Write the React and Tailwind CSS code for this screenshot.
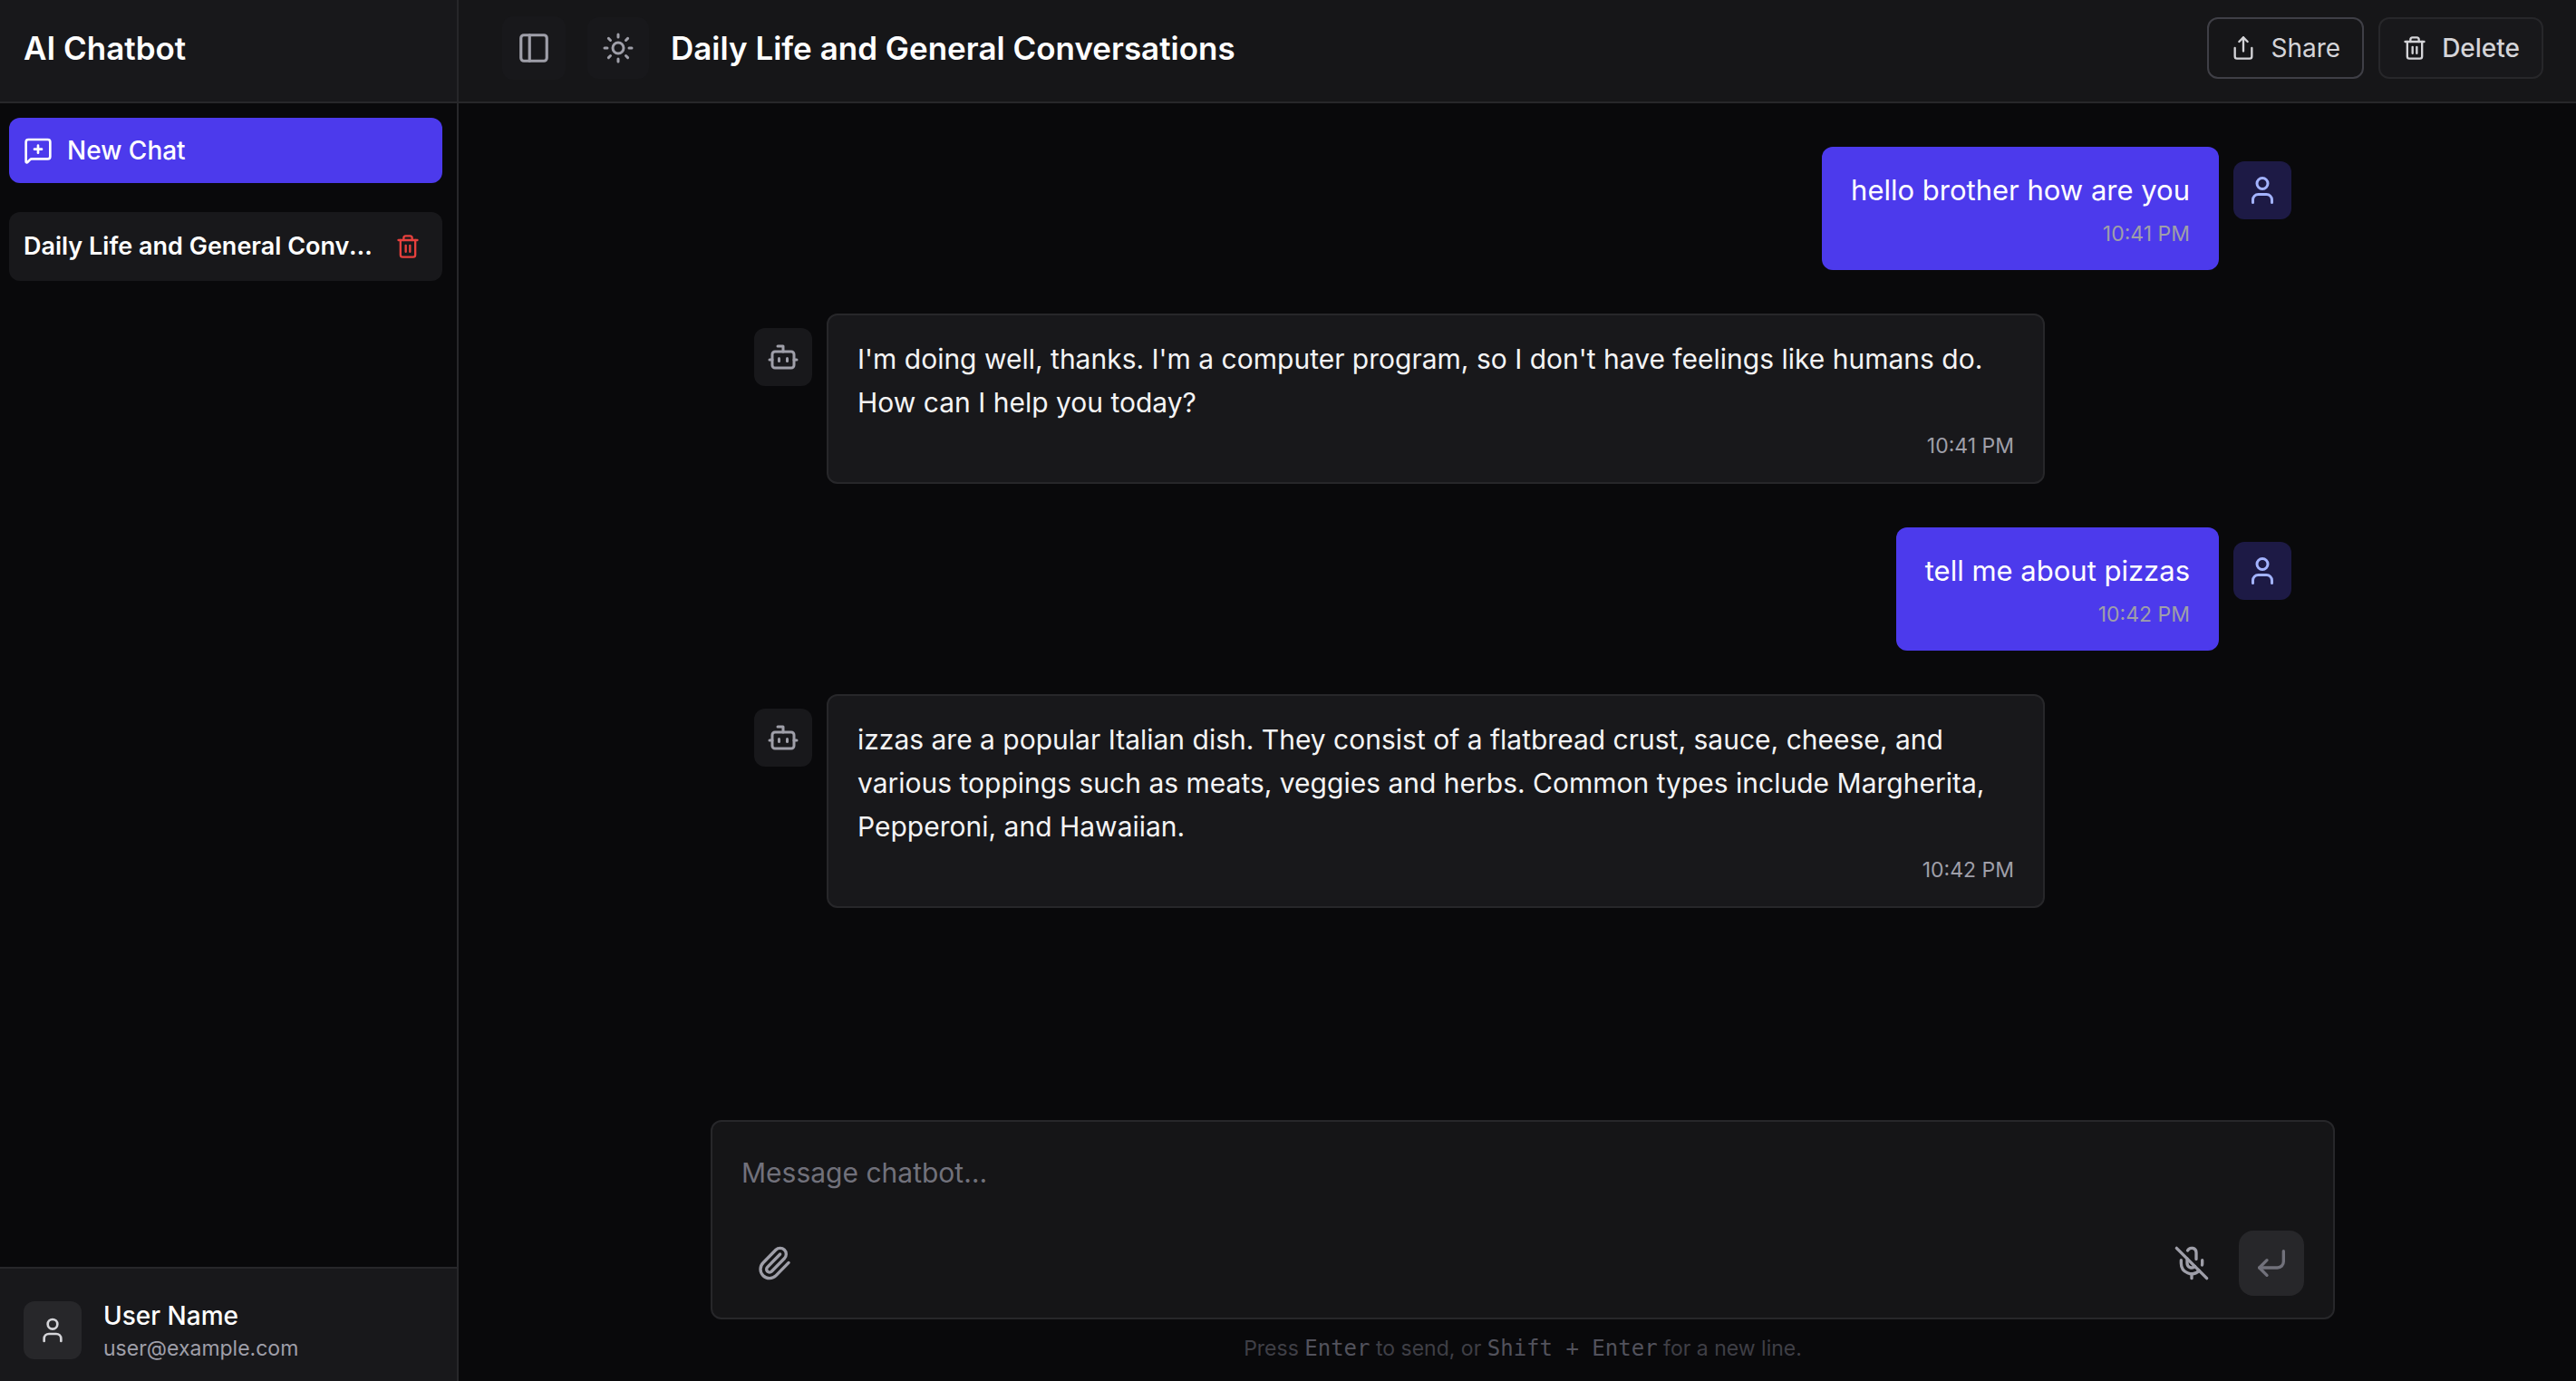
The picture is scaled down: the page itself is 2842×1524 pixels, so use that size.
import React, { useState } from 'react';
import {
  Bot,
  CornerDownLeft,
  MessageSquarePlus,
  MicOff,
  PanelLeft,
  Paperclip,
  Share,
  Sun,
  Trash2,
  User,
} from 'lucide-react';

const chats = [{ id: 1, title: 'Daily Life and General Conversations' }];

const messages = [
  { id: 1, role: 'user', text: 'hello brother how are you', time: '10:41 PM' },
  {
    id: 2,
    role: 'bot',
    text: "I'm doing well, thanks. I'm a computer program, so I don't have feelings like humans do. How can I help you today?",
    time: '10:41 PM',
  },
  { id: 3, role: 'user', text: 'tell me about pizzas', time: '10:42 PM' },
  {
    id: 4,
    role: 'bot',
    text: 'izzas are a popular Italian dish. They consist of a flatbread crust, sauce, cheese, and various toppings such as meats, veggies and herbs. Common types include Margherita, Pepperoni, and Hawaiian.',
    time: '10:42 PM',
  },
];

const Sidebar = () => {
  return (
    <aside className="flex w-[506px] shrink-0 flex-col border-r-2 border-[#27272a] bg-[#09090b]">
      <div className="flex h-[114px] items-center border-b-2 border-[#27272a] bg-[#18181b] px-[26px] pb-[6px]">
        <h1 className="text-[35px] leading-10 font-semibold text-white">AI Chatbot</h1>
      </div>

      <div className="flex flex-1 flex-col gap-8 py-4 pr-4 pl-[10px]">
        <button className="flex h-[72px] items-center gap-4 rounded-xl bg-[#4c3aec] px-4 text-[28px] leading-10 font-medium text-white">
          <MessageSquarePlus size={32} />
          New Chat
        </button>

        {/* Chat history */}
        <ul>
          {chats.map((chat) => (
            <li
              key={chat.id}
              className="flex h-[76px] items-center gap-6 rounded-xl bg-[#18181b] pr-6 pl-4"
            >
              <a
                href="#chat"
                className="min-w-0 flex-1 truncate text-[27px] leading-10 font-semibold text-white"
              >
                {chat.title}
              </a>
              <button aria-label="Delete chat" className="text-[#e7403d]">
                <Trash2 size={28} />
              </button>
            </li>
          ))}
        </ul>
      </div>

      {/* User info */}
      <div className="flex items-center gap-6 border-t-2 border-[#27272a] bg-[#18181b] px-[26px] pt-8 pb-5">
        <div className="flex size-16 items-center justify-center rounded-xl bg-[#27272a] text-[#d4d4d8]">
          <User size={32} />
        </div>
        <div>
          <p className="text-[28px] leading-10 font-medium text-white">User Name</p>
          <p className="text-[23px] leading-8 text-[#9f9fa9]">user@example.com</p>
        </div>
      </div>
    </aside>
  );
};

const Header = () => {
  return (
    <header className="flex h-[114px] items-center justify-between border-b-2 border-[#27272a] bg-[#161618] pr-9 pb-[6px] pl-12">
      <div className="flex items-center gap-6">
        <button
          aria-label="Toggle sidebar"
          className="rounded-xl bg-[#18181b] p-4 text-[#9f9fa9]"
        >
          <PanelLeft size={38} />
        </button>
        <button
          aria-label="Toggle theme"
          className="rounded-xl bg-[#18181b] p-4 text-[#9f9fa9]"
        >
          <Sun size={36} />
        </button>
        <h2 className="text-[35px] leading-10 font-semibold text-white">{chats[0].title}</h2>
      </div>
      <div className="flex gap-4">
        <button className="flex h-[68px] items-center gap-4 rounded-xl border-2 border-[#3f3f46] px-6 text-[28px] leading-10 text-[#d4d4d8]">
          <Share size={28} />
          Share
        </button>
        <button className="flex h-[68px] items-center gap-4 rounded-xl border-2 border-[#27272a] bg-[#18181b] px-6 text-[28px] leading-10 font-medium text-[#d4d4d8]">
          <Trash2 size={28} />
          Delete
        </button>
      </div>
    </header>
  );
};

const Message = ({ message }) => {
  const isUser = message.role === 'user';

  return (
    <div className={`flex items-start gap-4 ${isUser ? 'flex-row-reverse' : ''}`}>
      <div
        className={`mt-4 flex size-16 shrink-0 items-center justify-center rounded-xl ${
          isUser ? 'bg-[#1d1a45] text-[#a3b3ff]' : 'bg-[#18181b] text-[#9f9fa9]'
        }`}
      >
        {isUser ? <User size={36} /> : <Bot size={36} />}
      </div>
      <div
        className={`max-w-[1344px] rounded-xl px-8 py-6 ${
          isUser
            ? 'bg-[#4c3aec] text-[31px] text-white'
            : 'border-2 border-[#27272a] bg-[#18181b] text-3xl text-[#f4f4f5]'
        }`}
      >
        <p className="leading-12">{message.text}</p>
        <p className="mt-2 text-right text-[23px] leading-8 text-[#9f9fa9]">{message.time}</p>
      </div>
    </div>
  );
};

const MessageInput = () => {
  const [value, setValue] = useState('');

  return (
    <div className="px-12 pb-5">
      <form
        onSubmit={(e) => e.preventDefault()}
        className="mx-auto max-w-[1792px] rounded-xl border-2 border-[#27272a] bg-[#151517] px-8 pt-8 pb-6"
      >
        <textarea
          rows={1}
          value={value}
          onChange={(e) => setValue(e.target.value)}
          aria-label="Message chatbot"
          placeholder="Message chatbot…"
          className="block h-[88px] w-full resize-none text-3xl leading-12 text-white outline-none placeholder:text-[#71717b]"
        />
        <div className="flex items-center justify-between text-[#9f9fa9]">
          <button type="button" aria-label="Attach file" className="flex size-[72px] items-center justify-center">
            <Paperclip size={40} />
          </button>
          <div className="flex gap-4">
            <button type="button" aria-label="Voice input" className="flex size-[72px] items-center justify-center">
              <MicOff size={40} />
            </button>
            <button
              type="submit"
              aria-label="Send"
              className="flex size-[72px] items-center justify-center rounded-2xl bg-[#27272a] text-[#71717b]"
            >
              <CornerDownLeft size={40} />
            </button>
          </div>
        </div>
      </form>
      <p className="mt-4 text-center text-[23px] leading-8 text-[#3f3f46]">
        Press <kbd className="font-['DejaVu_Sans_Mono',monospace] text-2xl leading-8 text-[#52525c]">Enter</kbd> to
        send, or{' '}
        <kbd className="font-['DejaVu_Sans_Mono',monospace] text-2xl leading-8 text-[#52525c]">Shift + Enter</kbd> for
        a new line.
      </p>
    </div>
  );
};

const App = () => {
  return (
    <div className="flex h-screen bg-[#09090b] font-['Inter',sans-serif]">
      <Sidebar />
      <div className="flex min-w-0 flex-1 flex-col">
        <Header />
        <main className="flex min-h-0 flex-1 flex-col pl-3">
          <div className="flex-1 overflow-hidden px-12 py-12">
            <div className="mx-auto flex max-w-[1696px] flex-col gap-12">
              {messages.map((message) => (
                <Message key={message.id} message={message} />
              ))}
            </div>
          </div>
          <MessageInput />
        </main>
      </div>
    </div>
  );
};

export default App;
